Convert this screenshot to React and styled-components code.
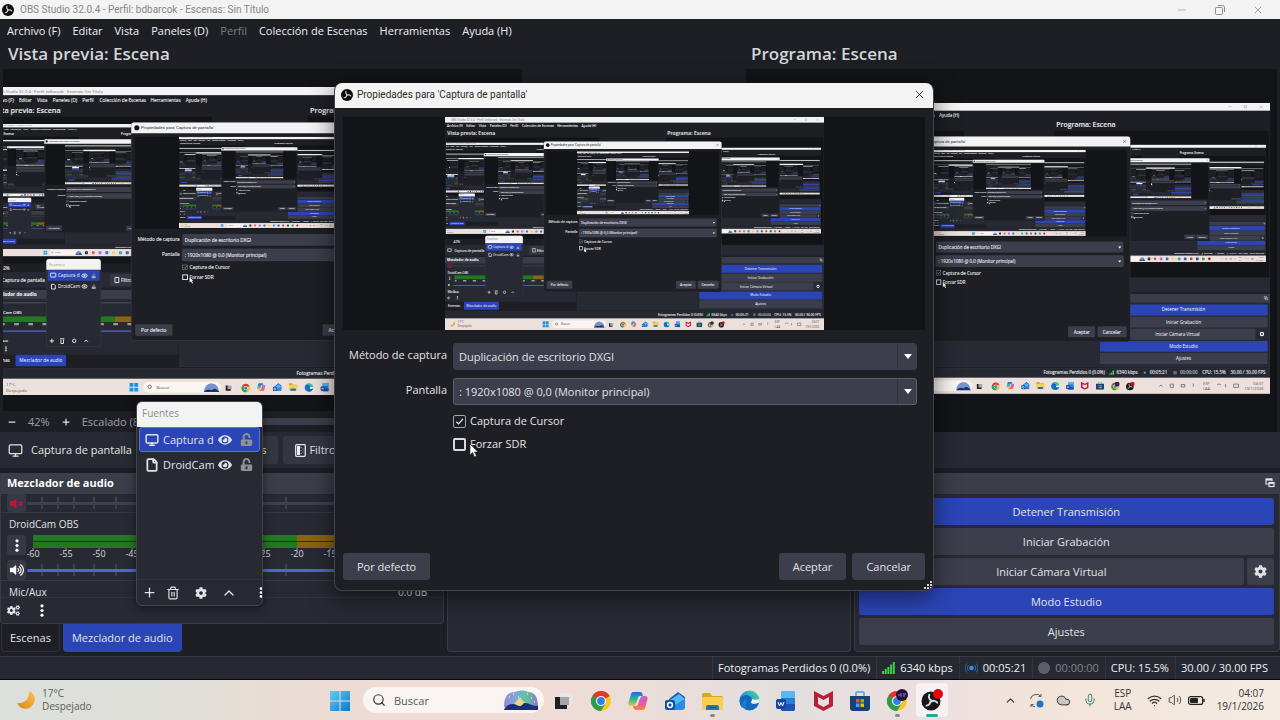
import React, { useState } from 'react';
import styled, { createGlobalStyle } from 'styled-components';
import { Monitor, File, Plus, Trash2, ChevronUp, Search, Cloud, Mic, Wifi, Volume2, X, Minus } from 'lucide-react';
import { FaCog, FaCogs, FaEye, FaUnlockAlt, FaVolumeUp, FaVolumeMute } from 'react-icons/fa';

// ==================== COLORES ====================
const colors = {
  base: '#1d1f25',
  canvas: '#131418',
  panel: '#272a33',
  button: '#3c3e4b',
  blue: '#2b45b7',
  border: '#3a3c45',
  white: '#f3f3f3',
  text: '#e2e3e6',
};

const GlobalStyle = createGlobalStyle`
  * {
    box-sizing: border-box;
  }

  body {
    margin: 0;
    background: ${colors.base};
    color: ${colors.text};
    font-family: 'Open Sans', 'Noto Sans', sans-serif;
    font-size: 11px;
    line-height: 16px;
  }

  button,
  select,
  input {
    font: inherit;
    color: inherit;
    margin: 0;
  }

  svg {
    display: block;
    flex-shrink: 0;
  }
`;

// ==================== ESTILOS ====================
const Desktop = styled.div`
  position: relative;
  display: flex;
  flex-direction: column;
  min-height: 100vh;
  overflow: hidden;
`;

const TitleBar = styled.header`
  display: flex;
  align-items: center;
  gap: 6px;
  height: 19px;
  padding: 0 16px 0 2px;
  background: ${colors.white};
  color: #111;
`;

const TitleText = styled.span`
  flex: 1;
  font-family: Roboto, 'Open Sans', sans-serif;
  font-size: 10px;
  color: #868686;
`;

const WindowButtons = styled.div`
  display: flex;
  gap: 26px;
`;

const PlainButton = styled.button`
  display: flex;
  align-items: center;
  justify-content: center;
  padding: 0;
  border: none;
  background: none;
  color: ${(props) => props.$color || 'inherit'};
`;

const MenuBar = styled.nav`
  display: flex;
  align-items: center;
  gap: 12px;
  height: 23px;
  padding: 0 7px;
`;

const MenuLink = styled.a`
  color: ${(props) => (props.$dim ? '#7d7e83' : '#f0f0f2')};
  text-decoration: none;
`;

const Studio = styled.main`
  flex: 1;
  display: grid;
  grid-template-columns: 519fr 224px 531fr;
  min-height: 390px;
  padding: 0 3px;
`;

const StudioColumn = styled.section`
  display: flex;
  flex-direction: column;
  min-width: 0;
`;

const StudioTitle = styled.h2`
  margin: 0;
  padding: 0 5px;
  font-size: 17px;
  font-weight: 600;
  line-height: 24px;
  height: 27px;
  color: #d4d5d8;
`;

const Canvas = styled.div`
  flex: 1;
  display: flex;
  align-items: center;
  justify-content: center;
  overflow: hidden;
  padding: ${(props) => (props.$program ? '0 0 4px' : '2px 0 0')};
  background: ${colors.canvas};
`;

const PreviewSvg = styled.svg`
  width: ${(props) => props.$width};
  height: auto;
`;

const ZoomBar = styled.div`
  display: flex;
  align-items: center;
  gap: 11px;
  height: 21px;
  padding: 0 4px;
  color: #9fa0a6;
`;

const ScrollTrack = styled.div`
  flex: 1;
  height: 7px;
  border-radius: 4px;
  background: ${colors.button};
`;

const SourceBar = styled.section`
  display: flex;
  align-items: center;
  gap: 5px;
  height: 36px;
  padding: 0 8px;
  margin-bottom: 5px;
  background: ${colors.panel};
`;

const SourceName = styled.div`
  display: flex;
  align-items: center;
  gap: 8px;
  width: 162px;
`;

const SourceButton = styled.button`
  display: flex;
  align-items: center;
  gap: 3px;
  height: 28px;
  padding: 0 12px;
  border: none;
  border-radius: 3px;
  background: #343641;
`;

const Docks = styled.section`
  display: grid;
  grid-template-columns: 444fr 403fr 426fr;
  gap: 3px;
  height: 183px;
  padding-bottom: 4px;
`;

const DockColumn = styled.div`
  display: flex;
  flex-direction: column;
  min-width: 0;
`;

const Dock = styled.div`
  flex: 1;
  display: flex;
  flex-direction: column;
  min-height: 0;
  border: 1px solid ${colors.border};
  border-top: none;
  border-radius: 0 0 4px 4px;
  background: ${colors.panel};
`;

const DockHeader = styled.div`
  display: flex;
  align-items: center;
  justify-content: space-between;
  height: 21px;
  padding: 0 4px 2px 6px;
  background: #3b3d48;
  color: #fff;
  font-weight: 700;
`;

const MixerBody = styled.div`
  height: 104px;
  overflow: hidden;
  border-bottom: 1px solid #31343d;
`;

const MixerRow = styled.div`
  display: grid;
  grid-template-columns: 20px 1fr;
  padding: 0 6px;
  border-bottom: 1px solid #363943;
`;

const MixerName = styled.div`
  grid-column: 1 / -1;
  display: flex;
  justify-content: space-between;
  height: 22px;
  padding: 0 10px 0 2px;
  line-height: 22px;
  font-size: 10px;
`;

const MixerButton = styled.button`
  display: flex;
  align-items: center;
  justify-content: center;
  width: 19px;
  height: ${(props) => props.$height || '20px'};
  padding: 0;
  border: none;
  border-radius: 3px;
  background: #363843;
  color: ${(props) => props.$color || '#fff'};
`;

const SliderStack = styled.div`
  display: grid;
  align-items: center;

  > * {
    grid-area: 1 / 1;
  }
`;

const Slider = styled.input`
  appearance: none;
  width: 100%;
  height: 3px;
  border-radius: 2px;
  background: ${(props) => (props.$muted ? '#3f424e' : '#4e68cc')};

  &::-webkit-slider-thumb {
    appearance: none;
    width: 0;
    height: 0;
  }
`;

const MixerTools = styled.div`
  display: flex;
  align-items: center;
  gap: 20px;
  flex: 1;
  padding: 0 6px;
`;

const Tabs = styled.div`
  display: flex;
  gap: 3px;
  height: 28px;
  padding-left: 1px;
`;

const Tab = styled.button`
  padding: 0 8px;
  border: 1px solid ${(props) => (props.$active ? colors.blue : '#2f3138')};
  border-top: none;
  border-radius: 0 0 4px 4px;
  background: ${(props) => (props.$active ? colors.blue : colors.base)};
`;

const Controls = styled.div`
  display: flex;
  flex-direction: column;
  gap: 3px;
  padding: 4px 5px 4px 4px;
`;

const ControlRow = styled.div`
  display: flex;
  gap: 3px;
`;

const ControlButton = styled.button`
  flex: ${(props) => (props.$square ? '0 0 27px' : '1')};
  display: flex;
  align-items: center;
  justify-content: center;
  height: 27px;
  padding: 0;
  border: none;
  border-radius: 3px;
  background: ${(props) => (props.$active ? colors.blue : colors.button)};
`;

const StatusBar = styled.footer`
  display: flex;
  justify-content: flex-end;
  height: 24px;
  padding-right: 6px;
  background: #262932;
  border-top: 1px solid ${colors.border};
  border-bottom: 1px solid #08090b;
`;

const StatusCell = styled.div`
  display: flex;
  align-items: center;
  gap: 5px;
  padding: 0 6px 0 5px;
  border-left: 1px solid #31343d;
  white-space: nowrap;
  color: ${(props) => (props.$dim ? '#84868c' : '#f0f0f2')};
`;

// ---------- ventana de fuentes ----------
const SourcesWindow = styled.aside`
  position: absolute;
  left: 136px;
  top: 401px;
  width: 127px;
  height: 205px;
  display: flex;
  flex-direction: column;
  overflow: hidden;
  border: 1px solid #43454e;
  border-radius: 6px;
  background: ${colors.panel};
  box-shadow: 0 2px 10px rgba(0, 0, 0, 0.5);
`;

const SourcesTitle = styled.div`
  height: 25px;
  padding: 0 5px;
  line-height: 23px;
  font-size: 10px;
  background: ${colors.white};
  color: #8d8d8d;
`;

const SourceItem = styled.button`
  display: flex;
  align-items: center;
  gap: 4px;
  height: 25px;
  margin: 0 2px;
  padding: 0 5px;
  text-align: left;
  border: 1px solid ${(props) => (props.$selected ? '#5b73d8' : 'transparent')};
  border-radius: 3px;
  background: ${(props) => (props.$selected ? colors.blue : 'none')};
`;

const SourceLabel = styled.span`
  width: 51px;
  overflow: hidden;
  white-space: nowrap;
`;

const LockSlot = styled.span`
  margin-left: 4px;
  color: #8f9092;
`;

const SourcesTools = styled.div`
  display: flex;
  height: 26px;
  margin-top: auto;
  padding-left: 2px;
  border-top: 1px solid #34363f;
`;

const ToolButton = styled(PlainButton)`
  flex: 0 0 ${(props) => props.$width || '28px'};
`;

// ---------- diálogo de propiedades ----------
const Dialog = styled.section`
  position: absolute;
  left: 334px;
  top: 83px;
  width: 600px;
  height: 508px;
  display: flex;
  flex-direction: column;
  overflow: hidden;
  border: 1px solid #42444b;
  border-top: none;
  border-radius: 8px;
  background: #1e1f24;
  box-shadow: 0 6px 24px rgba(0, 0, 0, 0.55);
`;

const DialogTitle = styled.header`
  display: flex;
  align-items: center;
  gap: 4px;
  height: 25px;
  padding: 0 7px 2px 6px;
  background: ${colors.white};
  color: #111;
`;

const DialogTitleText = styled.h1`
  flex: 1;
  margin: 0;
  font-family: Roboto, 'Open Sans', sans-serif;
  font-size: 10px;
  font-weight: 400;
  color: #2c2c2c;
`;

const DialogPreview = styled.div`
  display: flex;
  justify-content: center;
  margin: 9px 8px 13px;
  background: ${colors.canvas};
`;

const Form = styled.div`
  display: grid;
  grid-template-columns: 112px 1fr;
  column-gap: 6px;
  row-gap: 8px;
  padding: 0 16px 0 0;
`;

const FormLabel = styled.label`
  text-align: right;
  line-height: 24px;
`;

const SelectBox = styled.div`
  display: grid;
  align-items: center;

  > * {
    grid-area: 1 / 1;
  }
`;

const Select = styled.select`
  appearance: none;
  width: 100%;
  height: 27px;
  padding: 0 5px;
  border: 1px solid ${(props) => (props.$focused ? '#5d5f6c' : colors.button)};
  border-radius: 3px;
  background: ${colors.button};
`;

const SelectArrow = styled.span`
  justify-self: end;
  display: flex;
  align-items: center;
  justify-content: center;
  width: 20px;
  height: 25px;
  border-left: 1px solid #2f313b;
  pointer-events: none;
`;

const Checks = styled.div`
  grid-column: 2;
  display: flex;
  flex-direction: column;
  gap: 7px;
`;

const CheckLabel = styled.label`
  display: flex;
  align-items: center;
  gap: 4px;
`;

const Checkbox = styled.input`
  appearance: none;
  width: 13px;
  height: 13px;
  border: ${(props) => (props.$hover ? '2px solid #dcdcdf' : '1px solid #a2a3a8')};
  border-radius: 2px;
  background: center / 11px no-repeat;

  &:checked {
    background-image: url("data:image/svg+xml,%3Csvg xmlns='http://www.w3.org/2000/svg' viewBox='0 0 12 12'%3E%3Cpath d='M2.5 6.2 5 8.6l4.8-5.4' fill='none' stroke='%23e8e8ea' stroke-width='1.4'/%3E%3C/svg%3E");
  }
`;

const DialogButtons = styled.div`
  display: flex;
  gap: 6px;
  margin-top: auto;
  padding: 0 8px 10px;
`;

const DialogButton = styled.button`
  height: 27px;
  padding: 0 14px;
  margin-right: ${(props) => (props.$first ? 'auto' : '0')};
  border: none;
  border-radius: 3px;
  background: ${colors.button};
`;

const SizeGrip = styled.svg`
  position: absolute;
  right: 1px;
  bottom: 1px;
`;

const Pointer = styled.svg`
  position: absolute;
  left: 469px;
  top: 443px;
`;

// ---------- barra de tareas ----------
const Taskbar = styled.footer`
  display: grid;
  grid-template-columns: 1fr auto 1fr;
  align-items: center;
  height: 40px;
  background: linear-gradient(90deg, #dcdfdc 0%, #e0dfd9 14%, #eddcd4 26%, #efdcd6 45%, #e3dfde 62%, #ecdfe0 73%, #f3e4d9 82%, #f3ebe2 100%);
  font-size: 10px;
  line-height: 13px;
  color: #333;
`;

const Weather = styled.div`
  display: flex;
  align-items: center;
  gap: 6px;
  padding-left: 16px;
`;

const WeatherText = styled.div`
  color: #5b5d5d;
`;

const TaskCenter = styled.div`
  display: flex;
  align-items: center;
  gap: 1px;
  padding-right: 4px;
`;

const SearchBox = styled.label`
  display: flex;
  align-items: center;
  gap: 8px;
  width: 181px;
  height: 26px;
  margin: 0 1px 0 10px;
  padding: 0 5px 0 9px;
  border-radius: 13px;
  background: #faf5f3;
`;

const SearchInput = styled.input`
  flex: 1;
  min-width: 0;
  padding: 0;
  border: none;
  background: none;
  font-size: 11px;

  &::placeholder {
    color: #555;
    opacity: 1;
  }
`;

const TaskButton = styled.button`
  display: flex;
  flex-direction: column;
  align-items: center;
  justify-content: flex-end;
  gap: 3px;
  width: ${(props) => (props.$narrow ? '24px' : '36px')};
  height: 34px;
  padding: 0;
  border: none;
  background: none;

  &::after {
    content: '';
    width: ${(props) => (props.$active ? '12px' : '5px')};
    height: 3px;
    border-radius: 2px;
    background: ${(props) => (props.$active ? '#1fa9a0' : props.$open ? '#8b8988' : 'transparent')};
  }
`;

const ActiveTask = styled(TaskButton)`
  width: 32px;
  border-radius: 4px;
  background: #f7f2f1;
`;

const Tray = styled.div`
  display: flex;
  align-items: center;
  justify-content: flex-end;
  gap: 12px;
  padding-right: 16px;
`;

const TrayGroup = styled.div`
  display: flex;
  align-items: center;
  gap: 6px;
  margin: 0 0 0 3px;
`;

const TrayText = styled.div`
  text-align: ${(props) => props.$align || 'center'};
  margin-left: ${(props) => (props.$align ? '0' : '5px')};
`;

// ==================== ICONOS ====================
const Dots = ({ size = 13 }) => (
  <svg width="4" height={size} viewBox="0 0 4 13" fill="#fff">
    <circle cx="2" cy="1.8" r="1.6" />
    <circle cx="2" cy="6.5" r="1.6" />
    <circle cx="2" cy="11.2" r="1.6" />
  </svg>
);

const ArrowDown = () => (
  <svg width="8" height="5" viewBox="0 0 8 5">
    <path d="M0 0h8L4 5z" fill="#fff" />
  </svg>
);

const FilterIcon = () => (
  <svg width="11" height="13" viewBox="0 0 11 13">
    <rect x=".7" y=".7" width="9.6" height="11.6" rx="1" fill="#30323c" stroke="#e6e6e8" strokeWidth="1.3" />
    <rect x="2" y="2" width="3" height="9" fill="#f0f0f0" />
    <path d="M6 3v1M6 6v1M6 9v1M8 4.500v1M8 7.500v1" stroke="#b5b6bb" />
  </svg>
);

const PopoutIcon = () => (
  <svg width="10" height="10" viewBox="0 0 10 10" fill="none" stroke="#e4e4e7" strokeWidth="1.2">
    <path d="M4 6H1V1h6v2" />
    <path d="M1 1.600h6" strokeWidth="2" />
    <rect x="4" y="4.500" width="5" height="4" />
    <path d="M4 5h5" strokeWidth="2" />
  </svg>
);

const SignalIcon = () => (
  <svg width="13" height="12" viewBox="0 0 13 12" fill="#3fcf45">
    <rect x="0" y="9" width="2" height="3" />
    <rect x="2.700" y="7" width="2" height="5" />
    <rect x="5.400" y="5" width="2" height="7" />
    <rect x="8.100" y="2.500" width="2" height="9.500" />
    <rect x="10.800" y="0" width="2" height="12" />
  </svg>
);

const LiveIcon = () => (
  <svg width="13" height="12" viewBox="0 0 13 12" fill="none" stroke="#2a6db5">
    <circle cx="6.500" cy="6" r="2.300" fill="#3d8fe0" stroke="none" />
    <path d="M3.600 3a4.200 4.200 0 0 0 0 6M9.400 3a4.200 4.200 0 0 1 0 6M1.800 1.500a6.500 6.500 0 0 0 0 9M11.200 1.500a6.500 6.500 0 0 1 0 9" />
  </svg>
);

const ObsBlades = () => (
  <g fill="none" stroke="#d9d9dc" strokeWidth="1.900" strokeLinecap="round">
    {[0, 120, 240].map((angle) => (
      <path key={angle} d="M10 9.200C8.200 8.500 7.300 6 8.300 3.800" transform={`rotate(${angle} 10 10)`} />
    ))}
  </g>
);

const ObsLogo = ({ size }) => (
  <svg width={size} height={size} viewBox="0 0 20 20">
    <circle cx="10" cy="10" r="10" fill="#0c0c0e" />
    <ObsBlades />
  </svg>
);

const MoonIcon = () => (
  <svg width="20" height="20" viewBox="0 0 20 20">
    <defs>
      <linearGradient id="moon" x1="1" y1="0" x2="0" y2="1">
        <stop offset="0" stopColor="#f8c14c" />
        <stop offset="1" stopColor="#e08616" />
      </linearGradient>
    </defs>
    <path d="M13 1C20 4 20.500 12 15.500 16.500 11 20.500 4 19.500 1 13c7 1 13-4 12-12z" fill="url(#moon)" />
  </svg>
);

const WindowsIcon = () => (
  <svg width="20" height="20" viewBox="0 0 20 20">
    <defs>
      <linearGradient id="win" x1="0" y1="0" x2="1" y2="1">
        <stop offset="0" stopColor="#5cd0f5" />
        <stop offset="1" stopColor="#0a77cf" />
      </linearGradient>
    </defs>
    <path d="M0 0h9.500v9.500H0zM10.500 0H20v9.500h-9.500zM0 10.500h9.500V20H0zM10.500 10.500H20V20h-9.500z" fill="url(#win)" />
  </svg>
);

const SearchArt = () => (
  <svg width="36" height="21" viewBox="0 0 36 21">
    <defs>
      <linearGradient id="aurora">
        <stop offset="0" stopColor="#9b8ad6" />
        <stop offset=".35" stopColor="#7fa7d8" />
        <stop offset=".65" stopColor="#5fc59b" />
        <stop offset="1" stopColor="#8f7bd0" />
      </linearGradient>
    </defs>
    <path d="M1 17C1 6 5 2 12 2c4-2 10-2 13 0 7 0 10 5 10 15z" fill="url(#aurora)" />
    <path d="M10 15 17 7l3 4 5 3-7 4z" fill="#ead58c" />
    <path d="M1 20c1-4 5-6 9-6 3 0 4 2 7 2s3-4 6-3c3 0 5 3 12 3v4z" fill="#1b2f74" />
    <path d="M6 7h1M10 4h1M15 7h1M24 4h1M28 8h1M31 12h1" stroke="#fff" />
  </svg>
);

const TaskViewIcon = () => (
  <svg width="20" height="20" viewBox="0 0 20 20">
    <path d="M1 6h12v12H1z" fill="#201f22" />
    <path d="M6 2h13v12H6z" fill="#e6e5e7" />
    <path d="M6 6h9v8H6z" fill="#a6a6a9" />
  </svg>
);

const ChromeIcon = ({ badge }) => (
  <svg width="22" height="22" viewBox="0 0 22 22">
    <circle cx="11" cy="12" r="10" fill="#f9c623" />
    <path d="M11 12 2.300 7A10 10 0 0 1 19.700 7z" fill="#db3a2c" />
    <path d="M11 12 2.300 7A10 10 0 0 0 11 22l4.500-7.500z" fill="#2c9b4b" />
    <circle cx="11" cy="12" r="5" fill="#fff" />
    <circle cx="11" cy="12" r="3.900" fill="#3b7de8" />
    {badge && (
      <g>
        <circle cx="16" cy="6" r="6" fill="#24103c" />
        <path d="M12 6h2M15 4v4M17 5h3M17 7h2" stroke="#9a7bd6" />
      </g>
    )}
  </svg>
);

const CopilotIcon = () => (
  <svg width="20" height="20" viewBox="0 0 20 20">
    <defs>
      <linearGradient id="copA" x1="0" y1="0" x2="0" y2="1">
        <stop offset="0" stopColor="#2268dc" />
        <stop offset=".5" stopColor="#26b5a5" />
        <stop offset="1" stopColor="#f2c530" />
      </linearGradient>
      <linearGradient id="copB" x1="0" y1="0" x2="0" y2="1">
        <stop offset="0" stopColor="#b763e0" />
        <stop offset=".6" stopColor="#ef5a8e" />
        <stop offset="1" stopColor="#f58a3c" />
      </linearGradient>
    </defs>
    <path d="M5 1h7c2 0 2 1 3 4h-3c-2 0-2 2-3 5s-2 5-4 5H3c-3 0-3-3-2-5l2-7c.400-1 1-2 2-2z" fill="url(#copA)" />
    <path d="M15 19H8c-2 0-2-1-3-4h3c2 0 2-2 3-5s2-5 4-5h2c3 0 3 3 2 5l-2 7c-.400 1-1 2-2 2z" fill="url(#copB)" />
  </svg>
);

const OutlookIcon = () => (
  <svg width="21" height="20" viewBox="0 0 21 20">
    <path d="M4 8 13 1l7 5v11H5z" fill="#1a5fc0" />
    <path d="m5 9 9-6 6 5-9 6z" fill="#53b9f0" />
    <path d="M5 18 20 8v8c0 2-1 3-3 3H7z" fill="#2b8be4" />
    <rect x="0" y="9" width="10" height="10" rx="2" fill="#0f50a8" />
    <circle cx="5" cy="14" r="2.400" fill="none" stroke="#fff" strokeWidth="1.500" />
  </svg>
);

const FolderIcon = () => (
  <svg width="21" height="19" viewBox="0 0 21 19">
    <path d="M0 3c0-1 .500-2 2-2h6l2 3h9c1 0 2 .500 2 2v2H0z" fill="#dba520" />
    <rect x="0" y="5" width="21" height="13" rx="1.500" fill="#f8d04f" />
    <path d="M4 18v-3c0-1 .500-2 2-2h9c1 0 2 1 2 2v3z" fill="#1d77bd" />
    <path d="M7 15.500h7" stroke="#0e548d" />
  </svg>
);

const EdgeIcon = () => (
  <svg width="21" height="21" viewBox="0 0 21 21">
    <defs>
      <linearGradient id="edge" x1="0" y1="1" x2="1" y2="0">
        <stop offset="0" stopColor="#1360b5" />
        <stop offset=".5" stopColor="#22a3d8" />
        <stop offset="1" stopColor="#5fd66a" />
      </linearGradient>
    </defs>
    <circle cx="10.500" cy="10.500" r="10" fill="url(#edge)" />
    <path d="M1 9c2-5 8-5 11-2 2 2 1 4 0 5 1 2 5 2 8 0-1 5-5 8-9 8-5-1-6-7-3-10-3 0-6 3-5 8C1 15 0 12 1 9z" fill="#1269bf" />
    <path d="M12.500 8.500c1 1.500 0 3-.700 3.800 1 2 5 2 8.200.200l.500-3.500c-3 1-6 1-8-.500z" fill="#e9f5f3" />
  </svg>
);

const WordIcon = () => (
  <svg width="20" height="20" viewBox="0 0 20 20">
    <rect x="5" y="0" width="14" height="20" rx="2" fill="#2b7cd3" />
    <path d="M5 2c0-1 1-2 2-2h10c1 0 2 1 2 2v5H5z" fill="#58b6f0" />
    <path d="M5 13h14v5c0 1-1 2-2 2H7c-1 0-2-1-2-2z" fill="#1b53b5" />
    <rect x="0" y="8" width="10" height="10" rx="2" fill="#1746a0" />
    <path d="m2 11 1.500 4L5 11.500 6.500 15 8 11" stroke="#fff" fill="none" />
  </svg>
);

const McAfeeIcon = () => (
  <svg width="19" height="20" viewBox="0 0 19 20">
    <path d="M0 0 9.500 5 19 0v15l-9.500 5L0 15zm4 6v7l5.500 3 5.500-3V6L9.500 9z" fill="#bb1f36" fillRule="evenodd" />
  </svg>
);

const StoreIcon = () => (
  <svg width="20" height="20" viewBox="0 0 20 20">
    <path d="M6 5V2c0-1 .500-1 1-1h6c.500 0 1 0 1 1v3" fill="none" stroke="#3fa7e0" strokeWidth="1.500" />
    <path d="M0 5h20v12c0 2-1 3-3 3H3c-2 0-3-1-3-3z" fill="#16427a" />
    <path d="M6 8h3.500v3.500H6z" fill="#f25022" />
    <path d="M10.500 8H14v3.500h-3.500z" fill="#7fba00" />
    <path d="M6 12.500h3.500V16H6z" fill="#35a9ee" />
    <path d="M10.500 12.500H14V16h-3.500z" fill="#ffb900" />
  </svg>
);

const ObsTaskIcon = () => (
  <svg width="22" height="22" viewBox="0 0 22 22">
    <g transform="translate(0 2)">
      <circle cx="10" cy="10" r="9.500" fill="#17171a" />
      <ObsBlades />
    </g>
    <circle cx="17" cy="5" r="5" fill="#e2040e" />
  </svg>
);

const BatteryIcon = () => (
  <svg width="17" height="9" viewBox="0 0 17 9">
    <rect x=".6" y=".6" width="14" height="7.800" rx="2" fill="none" stroke="#222" strokeWidth="1.200" />
    <rect x="2" y="2" width="8" height="5" rx="1" fill="#222" />
    <path d="M16 3v3" stroke="#222" strokeWidth="1.500" />
  </svg>
);

const SyncIcon = () => (
  <svg width="15" height="15" viewBox="0 0 15 15" fill="none" stroke="#555">
    <path d="M1.500 6A6 6 0 0 1 12 3.500V1M12 3.500H9.500M2 14v-2.500h2.500M2 11.500a6 6 0 0 0 4 2.300" />
    <circle cx="11" cy="11" r="3.500" fill="#1675c4" stroke="none" />
  </svg>
);

// ==================== PANTALLA EN MINIATURA ====================
const sliderTicks = [14, 30, 46, 66, 88, 112, 142, 176, 214, 258, 310, 372];
const meterMarks = ['-60', '-55', '-50', '-45', '-40', '-35', '-30', '-25', '-20', '-15', '-10', '-5', '0'];
const controlNames = ['Detener Transmisión', 'Iniciar Grabación', 'Iniciar Cámara Virtual', 'Modo Estudio', 'Ajustes'];
const menuItems = [
  [7, 'Archivo (F)'],
  [72, 'Editar'],
  [114, 'Vista'],
  [151, 'Paneles (D)'],
  [220, 'Perfil'],
  [260, 'Colección de Escenas'],
  [379, 'Herramientas'],
  [461, 'Ayuda (H)'],
];
const taskIcons = [
  TaskViewIcon,
  ChromeIcon,
  CopilotIcon,
  OutlookIcon,
  FolderIcon,
  EdgeIcon,
  WordIcon,
  McAfeeIcon,
  StoreIcon,
  ChromeIcon,
  ObsTaskIcon,
];
const taskColors = ['#252427', '#d8452f', '#b65ce0', '#1a6bc7', '#f5c63d', '#22a0c8', '#1b53b5', '#bb1f36', '#16427a', '#2c9b4b', '#c9101a'];

const MiniTexts = () => (
  <g fill={colors.text} stroke={colors.text} strokeWidth=".3">
    <text x="20" y="13.500" fontFamily="Roboto, sans-serif" fontSize="10" fill="#868686" stroke="none">OBS Studio 32.0.4 - Perfil: bdbarcok - Escenas: Sin Título</text>
    {menuItems.map(([x, label]) => (
      <text key={label} x={x} y="35">{label}</text>
    ))}
    <text x="8" y="60" fontSize="17" fontWeight="600">Vista previa: Escena</text>
    <text x="751" y="60" fontSize="17" fontWeight="600">Programa: Escena</text>
    <text x="29" y="426">42%</text>
    <text x="32" y="455">Captura de pantalla</text>
    <text x="310" y="455">Filtros</text>
    <text x="7" y="487" fontWeight="700">Mezclador de audio</text>
    <text x="9" y="529" fontSize="10">DroidCam OBS</text>
    <text x="9" y="595" fontSize="10">Mic/Aux</text>
    <text x="10" y="641">Escenas</text>
    <text x="719" y="672">Fotogramas Perdidos 0 (0.0%)</text>
    <text x="900" y="672">6340 kbps</text>
    <text x="982" y="672">00:05:21</text>
    <text x="1057" y="672" fillOpacity=".6">00:00:00</text>
    <text x="1112" y="672">CPU: 15.5%</text>
    <text x="1182" y="672">30.00 / 30.00 FPS</text>
    <g fill="#555" stroke="none" fontSize="10">
      <text x="42" y="697">17°C</text>
      <text x="42" y="710">Despejado</text>
      <text x="392" y="704">Buscar</text>
      <text x="1114" y="697">ESP</text>
      <text x="1114" y="711">LAA</text>
      <text x="1264" y="697" textAnchor="end">04:07</text>
      <text x="1264" y="711" textAnchor="end">19/1/2026</text>
    </g>
  </g>
);

const MiniDialog = ({ depth }) => (
  <g>
    <rect x="334" y="83" width="600" height="508" rx="6" fill="#1e1f24" stroke="#42444b" />
    <path d="M334 108V89q0-6 6-6h588q6 0 6 6v19z" fill={colors.white} />
    <circle cx="347" cy="95" r="6" fill="#111" />
    <path d="m916 91 8 8m0-8-8 8" stroke="#222" />
    <rect x="343" y="116" width="582" height="214" fill={colors.canvas} />
    <svg x="445" y="116" width="379" height="213" viewBox="0 0 1280 720">
      <MiniScreen depth={depth + 1} />
    </svg>
    <g fill={colors.button}>
      <rect x="453" y="343" width="464" height="27" rx="3" />
      <rect x="453" y="378" width="464" height="27" rx="3" stroke="#5d5f6c" />
      <rect x="343" y="553" width="87" height="27" rx="3" />
      <rect x="780" y="553" width="67" height="27" rx="3" />
      <rect x="853" y="553" width="72" height="27" rx="3" />
    </g>
    <path d="M904 355h8l-4 5zM904 390h8l-4 5z" fill="#fff" />
    <rect x="454" y="415" width="11" height="11" fill="none" stroke="#a2a3a8" />
    <path d="m456 420 3 3 5-6" fill="none" stroke="#fff" />
    <rect x="454" y="438" width="11" height="11" fill="none" stroke="#fff" strokeWidth="2" />
    <path d="M470 444v12l3-3 3 5 2-1-3-5h4z" fill="#fff" />
    {depth < 2 && (
      <g fill={colors.text} stroke={colors.text} strokeWidth=".3">
        <text x="357" y="99" fontFamily="Roboto, sans-serif" fontSize="10" fill="#2c2c2c" stroke="none">Propiedades para 'Captura de pantalla'</text>
        <text x="447" y="359" textAnchor="end">Método de captura</text>
        <text x="447" y="393" textAnchor="end">Pantalla</text>
        <text x="459" y="361">Duplicación de escritorio DXGI</text>
        <text x="459" y="396">: 1920x1080 @ 0,0 (Monitor principal)</text>
        <text x="470" y="425">Captura de Cursor</text>
        <text x="470" y="448">Forzar SDR</text>
        <text x="357" y="571">Por defecto</text>
        <text x="794" y="571">Aceptar</text>
        <text x="866" y="571">Cancelar</text>
      </g>
    )}
  </g>
);

const MiniSources = ({ depth }) => (
  <g>
    <rect x="136" y="401" width="127" height="204" rx="6" fill={colors.panel} stroke="#43454e" />
    <path d="M136 426v-19q0-6 6-6h115q6 0 6 6v19z" fill={colors.white} />
    <rect x="139" y="427" width="121" height="25" rx="3" fill={colors.blue} />
    <g fill="none" stroke="#fff" strokeWidth="2">
      <rect x="146" y="434" width="12" height="9" rx="1" />
      <path d="M148 460h6l3 3v8h-9z" />
      <ellipse cx="225" cy="440" rx="6" ry="4" />
      <ellipse cx="225" cy="465" rx="6" ry="4" />
      <path d="M144 592h10m-5-5v10M225 594l4-4 4 4M168 587h10m-8 2v9h6v-9" />
      <circle cx="201" cy="592" r="4" />
    </g>
    <g fill="#fff">
      <circle cx="225" cy="440" r="2" />
      <circle cx="225" cy="465" r="2" />
    </g>
    <path d="M242 440h9v6h-9zM242 465h9v6h-9z" fill="#a5a5a8" />
    <path d="M245 440v-3q2-3 4 0v1M245 465v-3q2-3 4 0v1" fill="none" stroke="#a5a5a8" strokeWidth="1.500" />
    {depth < 2 && (
      <g fill="#fff">
        <text x="142" y="417" fontSize="10" fill="#8d8d8d">Fuentes</text>
        <text x="163" y="444">Captura d</text>
        <text x="163" y="469">DroidCam</text>
      </g>
    )}
  </g>
);

const MiniScreen = ({ depth = 0 }) => {
  if (depth > 3) {
    return <rect width="1280" height="720" fill={colors.base} />;
  }

  return (
    <g fontFamily="'Open Sans', 'Noto Sans', sans-serif" fontSize="11">
      <rect width="1280" height="720" fill={colors.base} />
      <rect width="1280" height="19" fill={colors.white} />
      <path d="M1177 9h8M1216 6h6v6h-6zM1255 6l7 7m0-7-7 7" fill="none" stroke="#888" />
      <rect x="3" y="69" width="519" height="342" fill={colors.canvas} />
      <rect x="746" y="69" width="531" height="363" fill={colors.canvas} />
      <svg x="3" y="86" width="519" height="309" viewBox="35 0 1210 720">
        <MiniScreen depth={depth + 1} />
      </svg>
      <svg x="753" y="103" width="517" height="291" viewBox="0 0 1280 720">
        <MiniScreen depth={depth + 1} />
      </svg>

      <rect y="432" width="1280" height="36" fill={colors.panel} />
      <rect x="284" y="436" width="70" height="28" rx="3" fill="#343641" />
      <path d="M9 445h12v9H9zM296 444h9v12h-9z" fill="none" stroke="#fff" strokeWidth="2" />
      <rect y="473" width="444" height="151" fill={colors.panel} />
      <rect x="447" y="473" width="403" height="179" fill={colors.panel} stroke={colors.border} />
      <rect x="854" y="473" width="426" height="179" fill={colors.panel} stroke={colors.border} />
      <rect y="473" width="1280" height="21" fill="#3b3d48" />
      <path d="M1266 479h5v5h-5zM1269 482h5v5h-5z" fill="none" stroke="#fff" />

      <rect x="7" y="494" width="19" height="16" fill="#5a2638" />
      <path d="M28 503h412" stroke="#3f424e" strokeWidth="3" />
      <rect x="32" y="535" width="264" height="13" fill="#227a20" />
      <rect x="296" y="535" width="66" height="13" fill="#8a6412" />
      <rect x="362" y="535" width="70" height="13" fill="#7c1f23" />
      <path d="M33 553h400" stroke="#9a9ca2" strokeWidth="5" strokeDasharray="11 22" strokeDashoffset="5" />
      <path d="M28 569h412" stroke="#4e68cc" strokeWidth="3" />
      <path d="M9 567l6-5v10z" fill="#fff" />
      <path d="M16 539v11M42 605v11" stroke="#fff" strokeWidth="3" strokeDasharray="3 1" />
      <circle cx="12" cy="611" r="3" fill="none" stroke="#fff" strokeWidth="2" />
      <rect x="64" y="624" width="118" height="27" rx="3" fill={colors.blue} />
      {depth < 2 && <text x="73" y="641" fill="#fff">Mezclador de audio</text>}

      {controlNames.map((name, i) => (
        <g key={name}>
          <rect x="859" y={499 + i * 30} width={i === 2 ? 385 : 415} height="27" rx="3" fill={i === 0 || i === 3 ? colors.blue : colors.button} />
          {depth < 2 && (
            <text x={i === 2 ? 1051 : 1066} y={516 + i * 30} textAnchor="middle" fill="#fff">{name}</text>
          )}
        </g>
      ))}
      <circle cx="1260" cy="572" r="4" fill="none" stroke="#fff" strokeWidth="3" />

      <rect y="656" width="1280" height="24" fill="#262932" />
      <path d="M0 656h1280" stroke={colors.border} />
      <path d="M882 673v-3h3v3zm4 0v-6h3v6zm4 0v-11h4v11z" fill="#3fcf45" />
      <circle cx="970" cy="668" r="3" fill="#3d8fe0" />
      <circle cx="1045" cy="668" r="5" fill="#666870" />
      <rect y="680" width="1280" height="40" fill="#ebe0db" />
      <path d="M30 690q8 8-1 16-8 5-12-2 12 2 13-14z" fill="#eda22c" />
      <path d="M330 690h9v9h-9zM341 690h9v9h-9zM330 701h9v9h-9zM341 701h9v9h-9z" fill="#1b94dc" />
      <rect x="362" y="687" width="181" height="26" rx="13" fill="#faf5f3" />
      <circle cx="377" cy="699" r="4" fill="none" stroke="#333" strokeWidth="1.500" />
      <path d="M503 711q2-18 18-20 16 2 18 20z" fill="#7794c8" />
      <path d="M503 711q9-9 18-4 9-9 18 4z" fill="#1b2f74" />
      {depth === 0
        ? taskIcons.map((Icon, i) => (
            <g key={i} transform={`translate(${553 + i * 37} 690)`}>
              <Icon badge={i === 9} />
            </g>
          ))
        : taskColors.map((color, i) => (
            <g key={i}>
              <rect x={555 + i * 37} y="692" width="16" height="16" rx={i % 3 === 1 ? 8 : 3} fill={color} />
              <circle cx={563 + i * 37} cy="700" r="3" fill={i === 10 ? '#111' : '#e8ecf4'} fillOpacity=".6" />
            </g>
          ))}
      <path d="m1006 702 4-4 4 4M1033 696h8v8h-8zM1060 697h9v6h-9zM1090 694v8M1149 698q5-5 10 0M1170 696v8M1190 696h12v8h-12z" fill="none" stroke="#444" strokeWidth="1.500" />

      {depth < 2 && <MiniTexts />}
      <MiniSources depth={depth} />
      <MiniDialog depth={depth} />
    </g>
  );
};

// ==================== COMPONENTES ====================
const SliderTicks = () => (
  <svg width="100%" height="12">
    {sliderTicks.map((x) => (
      <path key={x} d={`M${x + 1} 0v12`} stroke="#565965" />
    ))}
  </svg>
);

const Meter = () => (
  <svg width="408" height="25" fontSize="9" fill="#d8d9dc">
    <g transform="translate(6 0)">
      <rect width="264" height="13" fill="#227a20" />
      <rect x="264" width="66" height="13" fill="#8a6412" />
      <rect x="330" width="66" height="13" fill="#7c1f23" />
      <path d="M0 6.500h396" stroke="#123d12" />
    </g>
    {meterMarks.map((mark, i) => (
      <g key={mark}>
        <path d={`M${6 + i * 33} 13v3`} stroke="#8b8d94" />
        <text x={6 + i * 33} y="22" textAnchor="middle">{mark}</text>
      </g>
    ))}
  </svg>
);

const Mixer = () => (
  <Dock>
    <DockHeader>Mezclador de audio</DockHeader>
    <MixerBody>
      <MixerRow>
        <MixerButton $color="#b3173f" $height="18px" aria-label="Silenciado">
          <FaVolumeMute size={13} />
        </MixerButton>
        <SliderStack>
          <SliderTicks />
          <Slider type="range" $muted aria-label="Volumen de escritorio" />
        </SliderStack>
      </MixerRow>
      <MixerRow>
        <MixerName>DroidCam OBS</MixerName>
        <MixerButton aria-label="Opciones de DroidCam">
          <Dots />
        </MixerButton>
        <Meter />
        <MixerButton aria-label="Silenciar DroidCam">
          <FaVolumeUp size={14} />
        </MixerButton>
        <SliderStack>
          <SliderTicks />
          <Slider type="range" aria-label="Volumen de DroidCam OBS" />
        </SliderStack>
      </MixerRow>
      <MixerRow>
        <MixerName>
          <span>Mic/Aux</span>
          <span>0.0 dB</span>
        </MixerName>
      </MixerRow>
    </MixerBody>
    <MixerTools>
      <PlainButton aria-label="Propiedades avanzadas de audio">
        <FaCogs size={13} />
      </PlainButton>
      <PlainButton aria-label="Menú del mezclador">
        <Dots />
      </PlainButton>
    </MixerTools>
  </Dock>
);

const ControlsDock = () => (
  <Dock>
    <DockHeader>
      <span>Controles</span>
      <PopoutIcon />
    </DockHeader>
    <Controls>
      {controlNames.map((name, i) => (
        <ControlRow key={name}>
          <ControlButton $active={i === 0 || i === 3}>{name}</ControlButton>
          {i === 2 && (
            <ControlButton $square aria-label="Configurar cámara virtual">
              <FaCog size={13} />
            </ControlButton>
          )}
        </ControlRow>
      ))}
    </Controls>
  </Dock>
);

const SourcesPanel = () => (
  <SourcesWindow>
    <SourcesTitle>Fuentes</SourcesTitle>
    <SourceItem $selected>
      <Monitor size={14} strokeWidth={2.500} />
      <SourceLabel>Captura d</SourceLabel>
      <FaEye size={14} />
      <LockSlot>
        <FaUnlockAlt size={13} />
      </LockSlot>
    </SourceItem>
    <SourceItem>
      <File size={14} strokeWidth={3} />
      <SourceLabel>DroidCam</SourceLabel>
      <FaEye size={14} />
      <LockSlot>
        <FaUnlockAlt size={13} />
      </LockSlot>
    </SourceItem>
    <SourcesTools>
      <ToolButton $width="20px" aria-label="Añadir fuente"><Plus size={15} /></ToolButton>
      <ToolButton aria-label="Eliminar fuente"><Trash2 size={14} /></ToolButton>
      <ToolButton aria-label="Propiedades de la fuente"><FaCog size={12} /></ToolButton>
      <ToolButton aria-label="Subir fuente"><ChevronUp size={16} /></ToolButton>
      <ToolButton $width="36px" aria-label="Más opciones"><Dots size={11} /></ToolButton>
    </SourcesTools>
  </SourcesWindow>
);

const PropertiesDialog = () => {
  const [method, setMethod] = useState('dxgi');
  const [screen, setScreen] = useState('0');
  const [cursor, setCursor] = useState(true);
  const [sdr, setSdr] = useState(false);

  return (
    <Dialog role="dialog" aria-labelledby="dialog-title">
      <DialogTitle>
        <ObsLogo size={12} />
        <DialogTitleText id="dialog-title">Propiedades para 'Captura de pantalla'</DialogTitleText>
        <PlainButton aria-label="Cerrar"><X size={13} strokeWidth={1.500} /></PlainButton>
      </DialogTitle>
      <DialogPreview>
        <PreviewSvg $width="379px" viewBox="0 0 1280 720">
          <MiniScreen />
        </PreviewSvg>
      </DialogPreview>
      <Form>
        <FormLabel htmlFor="method">Método de captura</FormLabel>
        <SelectBox>
          <Select id="method" value={method} onChange={(e) => setMethod(e.target.value)}>
            <option value="dxgi">Duplicación de escritorio DXGI</option>
          </Select>
          <SelectArrow><ArrowDown /></SelectArrow>
        </SelectBox>
        <FormLabel htmlFor="screen">Pantalla</FormLabel>
        <SelectBox>
          <Select id="screen" $focused value={screen} onChange={(e) => setScreen(e.target.value)}>
            <option value="0">: 1920x1080 @ 0,0 (Monitor principal)</option>
          </Select>
          <SelectArrow><ArrowDown /></SelectArrow>
        </SelectBox>
        <Checks>
          <CheckLabel>
            <Checkbox type="checkbox" checked={cursor} onChange={(e) => setCursor(e.target.checked)} />
            Captura de Cursor
          </CheckLabel>
          <CheckLabel>
            <Checkbox type="checkbox" $hover checked={sdr} onChange={(e) => setSdr(e.target.checked)} />
            Forzar SDR
          </CheckLabel>
        </Checks>
      </Form>
      <DialogButtons>
        <DialogButton $first>Por defecto</DialogButton>
        <DialogButton>Aceptar</DialogButton>
        <DialogButton>Cancelar</DialogButton>
      </DialogButtons>
      <SizeGrip width="8" height="8" viewBox="0 0 8 8" fill="#cfd0d3">
        <path d="M6 0h2v2H6zM3 3h2v2H3zM6 3h2v2H6zM0 6h2v2H0zM3 6h2v2H3zM6 6h2v2H6z" />
      </SizeGrip>
    </Dialog>
  );
};

const WindowsTaskbar = () => (
  <Taskbar>
    <Weather>
      <MoonIcon />
      <WeatherText>
        <div>17°C</div>
        <div>Despejado</div>
      </WeatherText>
    </Weather>
    <TaskCenter>
      <TaskButton $narrow aria-label="Inicio"><WindowsIcon /></TaskButton>
      <SearchBox>
        <Search size={14} />
        <SearchInput placeholder="Buscar" aria-label="Buscar" />
        <SearchArt />
      </SearchBox>
      <TaskButton aria-label="Vista de tareas"><TaskViewIcon /></TaskButton>
      <TaskButton aria-label="Chrome"><ChromeIcon /></TaskButton>
      <TaskButton aria-label="Copilot"><CopilotIcon /></TaskButton>
      <TaskButton aria-label="Outlook"><OutlookIcon /></TaskButton>
      <TaskButton $open aria-label="Explorador"><FolderIcon /></TaskButton>
      <TaskButton aria-label="Edge"><EdgeIcon /></TaskButton>
      <TaskButton aria-label="Word"><WordIcon /></TaskButton>
      <TaskButton aria-label="McAfee"><McAfeeIcon /></TaskButton>
      <TaskButton aria-label="Microsoft Store"><StoreIcon /></TaskButton>
      <TaskButton $open aria-label="Chrome, perfil"><ChromeIcon badge /></TaskButton>
      <ActiveTask $active aria-label="OBS Studio"><ObsTaskIcon /></ActiveTask>
    </TaskCenter>
    <Tray>
      <ChevronUp size={13} />
      <SyncIcon />
      <Cloud size={15} strokeWidth={1.500} fill="#c9c6c4" />
      <Mic size={14} strokeWidth={1.500} color="#2a7d6c" />
      <TrayText>
        <div>ESP</div>
        <div>LAA</div>
      </TrayText>
      <TrayGroup>
        <Wifi size={15} strokeWidth={2} />
        <Volume2 size={14} strokeWidth={1.500} />
        <BatteryIcon />
      </TrayGroup>
      <TrayText $align="right">
        <div>04:07</div>
        <div>19/1/2026</div>
      </TrayText>
    </Tray>
  </Taskbar>
);

const App = () => (
  <Desktop>
    <GlobalStyle />
    <TitleBar>
      <ObsLogo size={12} />
      <TitleText>OBS Studio 32.0.4 - Perfil: bdbarcok - Escenas: Sin Título</TitleText>
      <WindowButtons>
        <PlainButton $color="#a0a0a0" aria-label="Minimizar"><Minus size={12} strokeWidth={1.500} /></PlainButton>
        <PlainButton $color="#8a8a8a" aria-label="Restaurar">
          <svg width="12" height="12" viewBox="0 0 12 12" fill="none" stroke="currentColor">
            <rect x="1.500" y="3.500" width="7" height="7" rx="1" />
            <path d="M4 1.500h4.500q2 0 2 2V8" />
          </svg>
        </PlainButton>
        <PlainButton $color="#8a8a8a" aria-label="Cerrar OBS"><X size={12} strokeWidth={1.500} /></PlainButton>
      </WindowButtons>
    </TitleBar>
    <MenuBar>
      {menuItems.map(([x, label]) => (
        <MenuLink key={x} href="#" $dim={label === 'Perfil'}>{label}</MenuLink>
      ))}
    </MenuBar>

    <Studio>
      <StudioColumn>
        <StudioTitle>Vista previa: Escena</StudioTitle>
        <Canvas>
          <PreviewSvg $width="549px" viewBox="0 0 1280 720">
            <MiniScreen />
          </PreviewSvg>
        </Canvas>
        <ZoomBar>
          <PlainButton $color="#e0e0e2" aria-label="Alejar"><Minus size={10} strokeWidth={3} /></PlainButton>
          <span>42%</span>
          <PlainButton $color="#e0e0e2" aria-label="Acercar"><Plus size={10} strokeWidth={3} /></PlainButton>
          <span>Escalado (824x464)</span>
          <ScrollTrack />
        </ZoomBar>
      </StudioColumn>
      <span />
      <StudioColumn>
        <StudioTitle>Programa: Escena</StudioTitle>
        <Canvas $program>
          <PreviewSvg $width="calc(100% - 14px)" viewBox="0 0 1280 720">
            <MiniScreen />
          </PreviewSvg>
        </Canvas>
      </StudioColumn>
    </Studio>

    <SourceBar>
      <SourceName>
        <Monitor size={15} strokeWidth={2} />
        Captura de pantalla
      </SourceName>
      <SourceButton>
        <FaCog size={12} />
        Propiedades
      </SourceButton>
      <SourceButton>
        <FilterIcon />
        Filtros
      </SourceButton>
    </SourceBar>

    <Docks>
      <DockColumn>
        <Mixer />
        <Tabs>
          <Tab>Escenas</Tab>
          <Tab $active>Mezclador de audio</Tab>
        </Tabs>
      </DockColumn>
      <DockColumn>
        <Dock>
          <DockHeader>Transiciones de escena</DockHeader>
        </Dock>
      </DockColumn>
      <DockColumn>
        <ControlsDock />
      </DockColumn>
    </Docks>

    <StatusBar>
      <StatusCell>Fotogramas Perdidos 0 (0.0%)</StatusCell>
      <StatusCell><SignalIcon />6340 kbps</StatusCell>
      <StatusCell><LiveIcon />00:05:21</StatusCell>
      <StatusCell $dim>
        <svg width="12" height="12"><circle cx="6" cy="6" r="6" fill="#5d5f66" /></svg>
        00:00:00
      </StatusCell>
      <StatusCell>CPU: 15.5%</StatusCell>
      <StatusCell>30.00 / 30.00 FPS</StatusCell>
    </StatusBar>
    <WindowsTaskbar />

    <SourcesPanel />
    <PropertiesDialog />
    <Pointer width="9" height="15" viewBox="0 0 9 15">
      <path d="M1 1v11l2.500-2.500L5.500 14l2-1-2-4H9z" fill="#fff" stroke="#222" strokeWidth=".6" />
    </Pointer>
  </Desktop>
);

export default App;
